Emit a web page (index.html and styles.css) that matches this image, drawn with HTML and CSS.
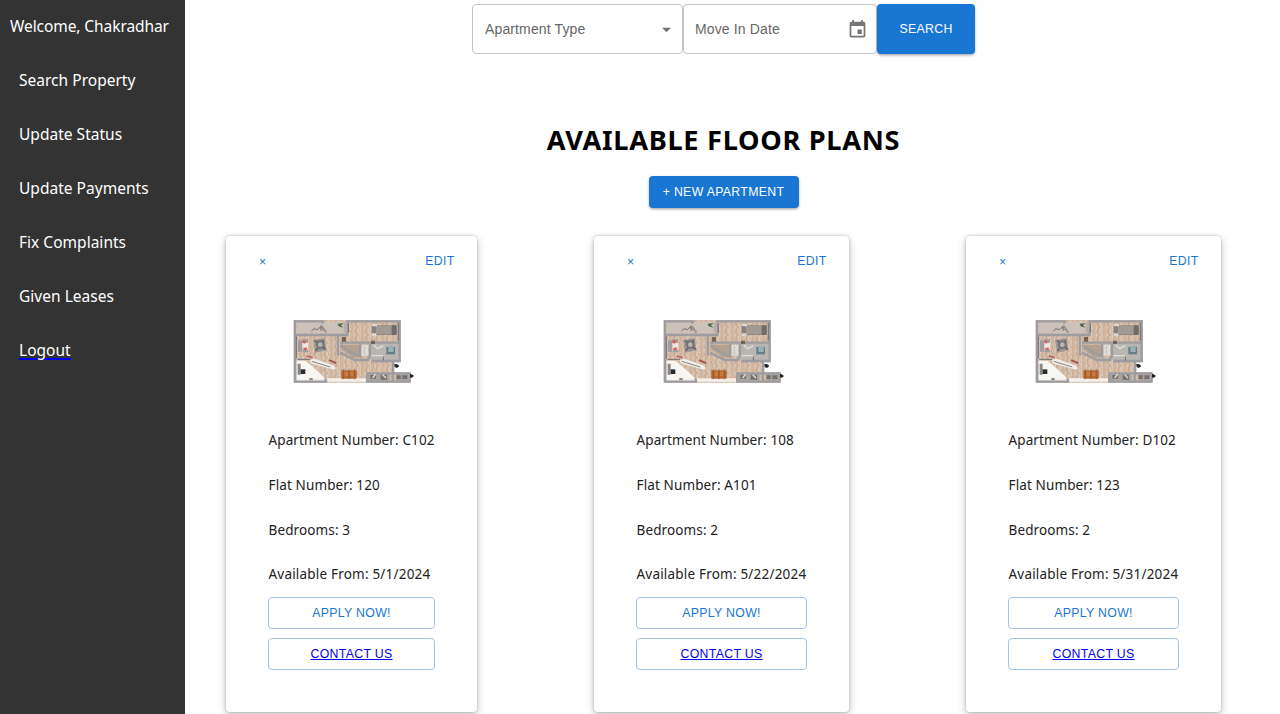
FILE: index.html
```html
<!DOCTYPE html>
<html lang="en">
<head>
<meta charset="utf-8">
<title>Available Floor Plans</title>
<link rel="stylesheet" href="styles.css">
</head>
<body>
<svg class="defs" width="0" height="0" aria-hidden="true">
  <defs>
    <pattern id="wood" width="31" height="23" patternUnits="userSpaceOnUse">
      <rect width="31" height="23" fill="#d6bda8"/>
      <path d="M3 0v14M9 8v15M14 0v23M20 4v15M26 0v12M29 14v9" stroke="#b8957b" stroke-width="2"/>
      <path d="M6 2v12M17 9v14M23 0v15" stroke="#e8d8c9" stroke-width="3"/>
    </pattern>
    <symbol id="plan" viewBox="0 0 435 255">
      <path d="M41 30H362V157H343V187H390V218H41Z" fill="url(#wood)"/>
      <path d="M50 36H198V70H50Z" fill="#cdc2ba"/>
      <path d="M55 152H76L92 165L135 204V212H50V152Z" fill="#f8f6f3"/>
      <path d="M84 205H258V215H84Z" fill="#f5f0eb"/>
      <path d="M270 100H358V150H270Z" fill="#b9b5b1"/>
      <path d="M184 104H243V134L221 145L184 118Z" fill="#b5a18f"/>
      <path d="M264 190H329V212H264ZM348 193H384V212H348Z" fill="#a8a39e"/>
      <g fill="none" stroke="#9c9da2" stroke-width="7">
        <path d="M45 31V215H142M45 34H132M127 31V41M45 75H202V38M199 34H359V153H274M174 76V137M180 98H359M180 128L225 150H264L270 136V102M240 102V140L215 128L181 106M339 155V187M258 215H389V190H262V215M338 188V215M137 205V217"/>
      </g>
      <path d="M49 79V145M52 148H90M205 40V68M355 38V92M310 140V151" stroke="#6d6f77" stroke-width="3" fill="none"/>
      <path d="M54 91H66V125H54ZM67 88H84V98H67ZM68 119H85V127H68Z" fill="#9f9c9f"/>
      <path d="M68 99H84V118H68Z" fill="#eee6e3"/>
      <path d="M68 90l9 3-2 8-8-3ZM69 115l10-3 3 6-10 3Z" fill="#d95e5e"/>
      <path d="M99 91L133 84L139 121L106 128Z" fill="#9b9694"/>
      <circle cx="121" cy="104" r="13" fill="#77757a"/>
      <circle cx="121" cy="104" r="7" fill="#b9b5b0"/>
      <path d="M105 91l8 7M132 90l-5 7M105 122l9-7M137 118l-8-7" stroke="#66676c" stroke-width="5"/>
      <path d="M90 150L103 146L159 166L168 174L163 179L91 160Z" fill="#f0eeeb"/>
      <path d="M95 154L151 171" stroke="#8a8480" stroke-width="3"/>
      <path d="M147 150L169 160" stroke="#a54c49" stroke-width="5"/>
      <path d="M80 138l18 5" stroke="#b95753" stroke-width="4"/>
      <path d="M94 64l8-9 10 4 9-8 13 13M123 46v17M126 48l9 12" stroke="#716b67" stroke-width="3" fill="none"/>
      <circle cx="104" cy="57" r="4" fill="#999"/><circle cx="137" cy="65" r="4" fill="#999"/>
      <path d="M173 41l18-1-8 6 7 7-14-4Z" fill="#486942"/>
      <path d="M191 38h10v30h-10Z" fill="#b5acac"/>
      <path d="M275 46H349V75H275Z" fill="#858180"/>
      <path d="M288 48H334V73H288Z" fill="#a19a95"/>
      <path d="M336 46H350V75H336Z" fill="#6d6b6c"/>
      <path d="M276 42h15v7h-15ZM275 70h14v8h-14Z" fill="#dfd8d2"/>
      <path d="M186 81h12v14h-12ZM273 92h12v10h-12Z" fill="#75634f"/>
      <path d="M245 105H264V137H245Z" fill="#deddda"/>
      <path d="M253 108v25" stroke="#aaa" stroke-width="2"/>
      <path d="M319 111H345V133H319Z" fill="#647e87"/>
      <path d="M325 108H341V126H325Z" fill="#9bb0b6"/>
      <path d="M281 105l12 11 17-9M274 137h35" stroke="#e3e0dc" stroke-width="4" fill="none"/>
      <path d="M184 181H230V206H184Z" fill="#b56732"/>
      <path d="M190 177v31M207 177v31M223 177v31" stroke="#8b552f" stroke-width="2"/>
      <path d="M194 185h10v14h-10ZM211 185h9v14h-9Z" fill="#c97b42"/>
      <path d="M61 178h15v14H61Z" fill="#292b2d"/>
      <path d="M53 161h9v33h-9ZM88 204h10v7H88Z" fill="#888"/>
      <path d="M271 195h17v11h-17ZM302 194h19v15h-19ZM350 196h12v11h-12ZM367 196h15v11h-15Z" fill="#75706c"/>
      <path d="M278 204l9-12M308 194l10 10" stroke="#ddd" stroke-width="4"/>
      <path d="M343 162l9 1 6 5-7 6-7-3ZM390 192l5 1 7 5-8 6-4-2Z" fill="#202225"/>
    </symbol>
  </defs>
</svg>
<div class="app">
  <nav class="sidebar">
    <div class="welcome">Welcome, Chakradhar</div>
    <ul class="menu">
      <li>Search Property</li>
      <li>Update Status</li>
      <li>Update Payments</li>
      <li>Fix Complaints</li>
      <li>Given Leases</li>
      <li><a href="#">Logout</a></li>
    </ul>
  </nav>
  <main class="content">
    <div class="search">
      <div class="field field-type"><span>Apartment Type</span>
        <svg class="caret" viewBox="0 0 24 24"><path d="M7 10l5 5 5-5z"/></svg></div>
      <div class="field field-date"><span>Move In Date</span>
        <svg class="calendar" viewBox="0 0 24 24"><path d="M17 12h-5v5h5v-5zM16 1v2H8V1H6v2H5c-1.11 0-1.99.9-1.99 2L3 19c0 1.1.89 2 2 2h14c1.1 0 2-.9 2-2V5c0-1.1-.9-2-2-2h-1V1h-2zm3 18H5V8h14v11z"/></svg></div>
      <button class="btn solid search-btn">SEARCH</button>
    </div>
    <h1 class="title">AVAILABLE FLOOR PLANS</h1>
    <button class="btn solid new-btn">+ NEW APARTMENT</button>
    <div class="cards">
      <article class="card">
        <div class="card-top"><span class="remove">×</span><span>EDIT</span></div>
        <svg class="plan"><use href="#plan"/></svg>
        <div class="info"><p>Apartment Number: C102</p><p>Flat Number: 120</p><p>Bedrooms: 3</p><p>Available From: 5/1/2024</p></div>
        <button class="btn outline">APPLY NOW!</button>
        <button class="btn outline"><a href="#">CONTACT US</a></button>
      </article>
      <article class="card wide">
        <div class="card-top"><span class="remove">×</span><span>EDIT</span></div>
        <svg class="plan"><use href="#plan"/></svg>
        <div class="info"><p>Apartment Number: 108</p><p>Flat Number: A101</p><p>Bedrooms: 2</p><p>Available From: 5/22/2024</p></div>
        <button class="btn outline">APPLY NOW!</button>
        <button class="btn outline"><a href="#">CONTACT US</a></button>
      </article>
      <article class="card wide">
        <div class="card-top"><span class="remove">×</span><span>EDIT</span></div>
        <svg class="plan"><use href="#plan"/></svg>
        <div class="info"><p>Apartment Number: D102</p><p>Flat Number: 123</p><p>Bedrooms: 2</p><p>Available From: 5/31/2024</p></div>
        <button class="btn outline">APPLY NOW!</button>
        <button class="btn outline"><a href="#">CONTACT US</a></button>
      </article>
    </div>
  </main>
</div>
</body>
</html>
```
FILE: styles.css
```css
* { box-sizing: border-box; }
body { margin: 0; height: 714px; overflow: hidden; background: #fff; font-family: "Noto Sans", sans-serif; }
.defs { display: block; }
.app { display: flex; height: 714px; }
.sidebar { width: 185px; flex: none; background: #333; color: #fff; font-size: 15.5px; letter-spacing: 0.02px; line-height: 54px; white-space: nowrap; }
.welcome { height: 53px; line-height: 52px; padding-left: 10px; letter-spacing: -0.08px; }
.menu { list-style: none; margin: 0; padding: 0 0 0 19px; }
.menu a { color: #fff; text-decoration: underline 1.5px #0000ee; text-underline-offset: 2px; text-decoration-skip-ink: none; }
.content { width: 1077px; display: flex; flex-direction: column; align-items: center; padding-top: 4px; }
.search { display: flex; height: 50px; flex: none; }
.field { display: flex; align-items: center; justify-content: space-between; border: 1px solid #c4c4c4; border-radius: 4px; padding-left: 12px; font: 14px "Liberation Sans", Arial, sans-serif; letter-spacing: 0.13px; color: #666; }
.field svg { fill: #757575; }
.field-type { width: 211px; padding-right: 5px; }
.field-date { width: 194px; padding-left: 11px; padding-right: 8px; }
.caret, .calendar { width: 21px; height: 21px; }
.btn { display: flex; align-items: center; justify-content: center; margin: 0; padding: 0; border: 0; border-radius: 4px; font: 12.3px "Liberation Sans", Arial, sans-serif; letter-spacing: 0.33px; }
.solid { background: #1976d2; color: #fff; box-shadow: 0 2px 3px -1px rgba(0,0,0,.25), 0 1px 3px rgba(0,0,0,.2); }
.search-btn { width: 98px; }
.title { margin: 66px 0 0; height: 40px; line-height: 40px; font-size: 27.2px; font-weight: 700; letter-spacing: 0.7px; color: #000; white-space: nowrap; }
.new-btn { width: 150px; height: 32px; margin-top: 16px; flex: none; }
.cards { display: flex; justify-content: space-between; width: 995px; margin-top: 28px; }
.card { width: 251px; height: 476px; padding: 0 42px; border-radius: 4px; background: #fff; box-shadow: 0 3px 8px rgba(0,0,0,.24), 0 0 3px rgba(0,0,0,.22); }
.wide { width: 255px; }
.card-top { display: flex; justify-content: space-between; margin: 0 -20px 0 -9px; padding-right: 0.5px; padding-top: 16px; height: 74px; font: 12.3px/18px "Liberation Sans", Arial, sans-serif; letter-spacing: 0.33px; color: #1976d2; }
.remove { padding-top: 1px; }
.plan { display: block; width: 145px; height: 85px; margin-left: 12px; }
.wide .plan { margin-left: 14px; }
.info { margin-top: 23px; height: 179px; padding-left: 0.5px; }
.info p { margin: 0; height: 44.75px; line-height: 45.2px; font-size: 13.5px; letter-spacing: 0.12px; color: #222; white-space: nowrap; }
.info p:last-child { letter-spacing: 0.2px; }
.outline { width: 100%; height: 32px; border: 1px solid #a3c3e8; background: #fff; color: #1976d2; }
.outline + .outline { margin-top: 9px; }
.outline a { color: #0000ee; text-decoration: underline; }
```
